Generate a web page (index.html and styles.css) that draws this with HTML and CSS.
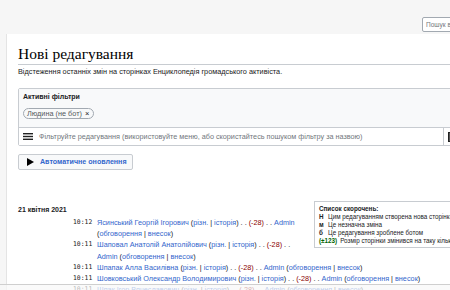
FILE: index.html
```html
<!DOCTYPE html>
<html lang="uk">
<head>
  <meta charset="UTF-8">
  <title>Нові редагування</title>
  <link rel="stylesheet" href="styles.css">
</head>
<body>
  <div class="top-bar">
    <div class="search">Пошук в Енциклопедії</div>
  </div>
  <div class="main">
    <div class="content">
      <h1 class="first-heading">Нові редагування</h1>
      <div class="intro">Відстеження останніх змін на сторінках Енциклопедія громадського активіста.</div>

      <div class="filters">
        <div class="active-filters">
          <div class="filters-title">Активні фільтри</div>
          <span class="chip">Людина (не бот) <span class="chip-x">×</span></span>
        </div>
        <div class="filter-input">
          <svg class="menu-icon" viewBox="0 0 10 7" width="10" height="7">
            <rect x="0" y="0" width="10" height="1.4" fill="#222"/>
            <rect x="0" y="2.8" width="10" height="1.4" fill="#222"/>
            <rect x="0" y="5.6" width="10" height="1.4" fill="#222"/>
          </svg>
          <span class="placeholder">Фільтруйте редагування (використовуйте меню, або скористайтесь пошуком фільтру за назвою)</span>
          <span class="save-btn"><span class="save-icon"></span></span>
        </div>
      </div>

      <button class="live-btn"><span class="play"></span>Автоматичне оновлення</button>

      <div class="results">
        <div class="legend">
          <div class="legend-title">Список скорочень:</div>
          <div class="legend-row"><b>Н</b><span>Цим редагуванням створена нова сторінка (див. також список нових сторінок)</span></div>
          <div class="legend-row"><b>м</b><span>Це незначна зміна</span></div>
          <div class="legend-row"><b>б</b><span>Це редагування зроблене ботом</span></div>
          <div class="legend-row"><span class="pos">(±123)</span><span>Розмір сторінки змінився на таку кількість байтів</span></div>
        </div>

        <h4 class="day">21 квітня 2021</h4>
        <ul class="changes">
          <li><span class="time">10:12</span><span class="entry"><a>Ясинський Георгій Ігорович</a> (<a>різн.</a> | <a>історія</a>) <span class="sep">. .</span> <span class="neg">(-28)</span> <span class="sep">. .</span> <a>Admin</a> (<a>обговорення</a> | <a>внесок</a>)</span></li>
          <li><span class="time">10:11</span><span class="entry"><a>Шаповал Анатолій Анатолійович</a> (<a>різн.</a> | <a>історія</a>) <span class="sep">. .</span> <span class="neg">(-28)</span> <span class="sep">. .</span> <a>Admin</a> (<a>обговорення</a> | <a>внесок</a>)</span></li>
          <li><span class="time">10:11</span><span class="entry"><a>Шпапак Алла Василівна</a> (<a>різн.</a> | <a>історія</a>) <span class="sep">. .</span> <span class="neg">(-28)</span> <span class="sep">. .</span> <a>Admin</a> (<a>обговорення</a> | <a>внесок</a>)</span></li>
          <li><span class="time">10:11</span><span class="entry"><a>Шовковський Олександр Володимирович</a> (<a>різн.</a> | <a>історія</a>) <span class="sep">. .</span> <span class="neg">(-28)</span> <span class="sep">. .</span> <a>Admin</a> (<a>обговорення</a> | <a>внесок</a>)</span></li>
          <li><span class="time">10:11</span><span class="entry"><a>Шпак Ігор Вячеславович</a> (<a>різн.</a> | <a>історія</a>) <span class="sep">. .</span> <span class="neg">(-28)</span> <span class="sep">. .</span> <a>Admin</a> (<a>обговорення</a> | <a>внесок</a>)</span></li>
        </ul>
      </div>
    </div>
  </div>
  <div class="hscroll"></div>
</body>
</html>
```

FILE: styles.css
```css
html, body {
  margin: 0;
  padding: 0;
  width: 450px;
  height: 290px;
  overflow: hidden;
  background: #f6f6f6;
  font-family: "Liberation Sans", Arial, sans-serif;
  color: #202122;
}
.top-bar {
  height: 34px;
  display: flex;
  align-items: flex-start;
  padding-left: 422px;
  box-sizing: border-box;
}
.search {
  margin-top: 17px;
  height: 15px;
  width: 80px;
  flex-shrink: 0;
  box-sizing: border-box;
  background: #fff;
  border: 1px solid #a2a9b1;
  border-radius: 2px;
  font-size: 6.5px;
  line-height: 13px;
  padding-left: 3px;
  color: #72777d;
  white-space: nowrap;
  overflow: hidden;
}
.main {
  padding-left: 6px;
}
.content {
  width: 480px;
  background: #fff;
  border-left: 1px solid #e4e4e4;
  box-sizing: border-box;
  padding: 10px 0 20px 11px;
  min-height: 260px;
}
.first-heading {
  margin: 0;
  font-family: "Liberation Serif", "Times New Roman", serif;
  font-weight: normal;
  font-size: 15.5px;
  line-height: 20px;
  color: #000;
  border-bottom: 1px solid #c8ccd1;
}
.intro {
  margin-top: 1px;
  font-size: 7.3px;
  line-height: 11px;
}
.filters {
  margin-top: 11px;
  border: 1px solid #c8ccd1;
  border-radius: 2px;
}
.active-filters {
  background: #f8f9fa;
  padding: 3px 4px 7px 4px;
  border-bottom: 1px solid #c8ccd1;
}
.filters-title {
  font-size: 7px;
  font-weight: bold;
  line-height: 10px;
}
.chip {
  display: inline-block;
  margin-top: 6px;
  height: 11px;
  box-sizing: border-box;
  padding: 0 4px 0 3px;
  border: 1px solid #a2a9b1;
  border-radius: 6px;
  background: #f8f9fa;
  font-size: 7.3px;
  line-height: 9px;
  color: #54595d;
}
.chip-x {
  margin-left: 1px;
  font-size: 7.5px;
  color: #202122;
}
.filter-input {
  height: 17px;
  display: flex;
  align-items: center;
  background: #fff;
  padding-left: 4px;
}
.menu-icon {
  flex-shrink: 0;
  margin-right: 6px;
}
.placeholder {
  flex: 1;
  font-size: 7.25px;
  color: #72777d;
  white-space: nowrap;
}
.save-btn {
  width: 42px;
  height: 17px;
  border-left: 1px solid #c8ccd1;
  display: flex;
  align-items: center;
  padding-left: 4px;
  box-sizing: border-box;
}
.save-icon {
  width: 6px;
  height: 8px;
  border: 1px solid #222;
  background: #555;
}
.live-btn {
  margin-top: 8px;
  height: 16px;
  width: 115px;
  display: flex;
  align-items: center;
  padding: 0 0 0 8px;
  background: #f8f9fa;
  border: 1px solid #c8ccd1;
  border-radius: 2px;
  font-family: "Liberation Sans", Arial, sans-serif;
  font-size: 7.1px;
  font-weight: bold;
  color: #36c;
}
.play {
  width: 0;
  height: 0;
  border-top: 4.5px solid transparent;
  border-bottom: 4.5px solid transparent;
  border-left: 7px solid #000;
  margin-right: 6px;
}
.results {
  padding-top: 31px;
}
.legend {
  float: right;
  width: 166px;
  margin-left: 6px;
  border: 1px solid #c8ccd1;
  padding: 3px 0 2px 4px;
  font-size: 6.3px;
  line-height: 8px;
  white-space: nowrap;
  overflow: hidden;
}
.legend-title {
  font-weight: bold;
}
.legend-row b {
  display: inline-block;
  width: 9px;
}
.legend-row .pos {
  color: #006400;
  font-weight: bold;
  margin-right: 3px;
}
.day {
  margin: 4px 0 2px 0;
  font-size: 7px;
  line-height: 10px;
  font-weight: bold;
}
.changes {
  list-style: none;
  margin: 0;
  padding: 0 0 0 55px;
  font-size: 7.25px;
  line-height: 11.2px;
}
.changes li {
  display: flex;
}
.time {
  flex-shrink: 0;
  width: 24px;
  font-family: "DejaVu Sans Mono", monospace;
  font-size: 6.4px;
  color: #202122;
}
.entry {
  flex: 1;
}
.changes a {
  color: #36c;
}
.sep {
  color: #202122;
}
.neg {
  color: #8b0000;
}
.hscroll {
  position: fixed;
  left: 0;
  right: 0;
  top: 284px;
  bottom: 0;
  border-top: 1px solid #cfcfcf;
  background: rgba(248, 248, 248, 0.7);
}
```
